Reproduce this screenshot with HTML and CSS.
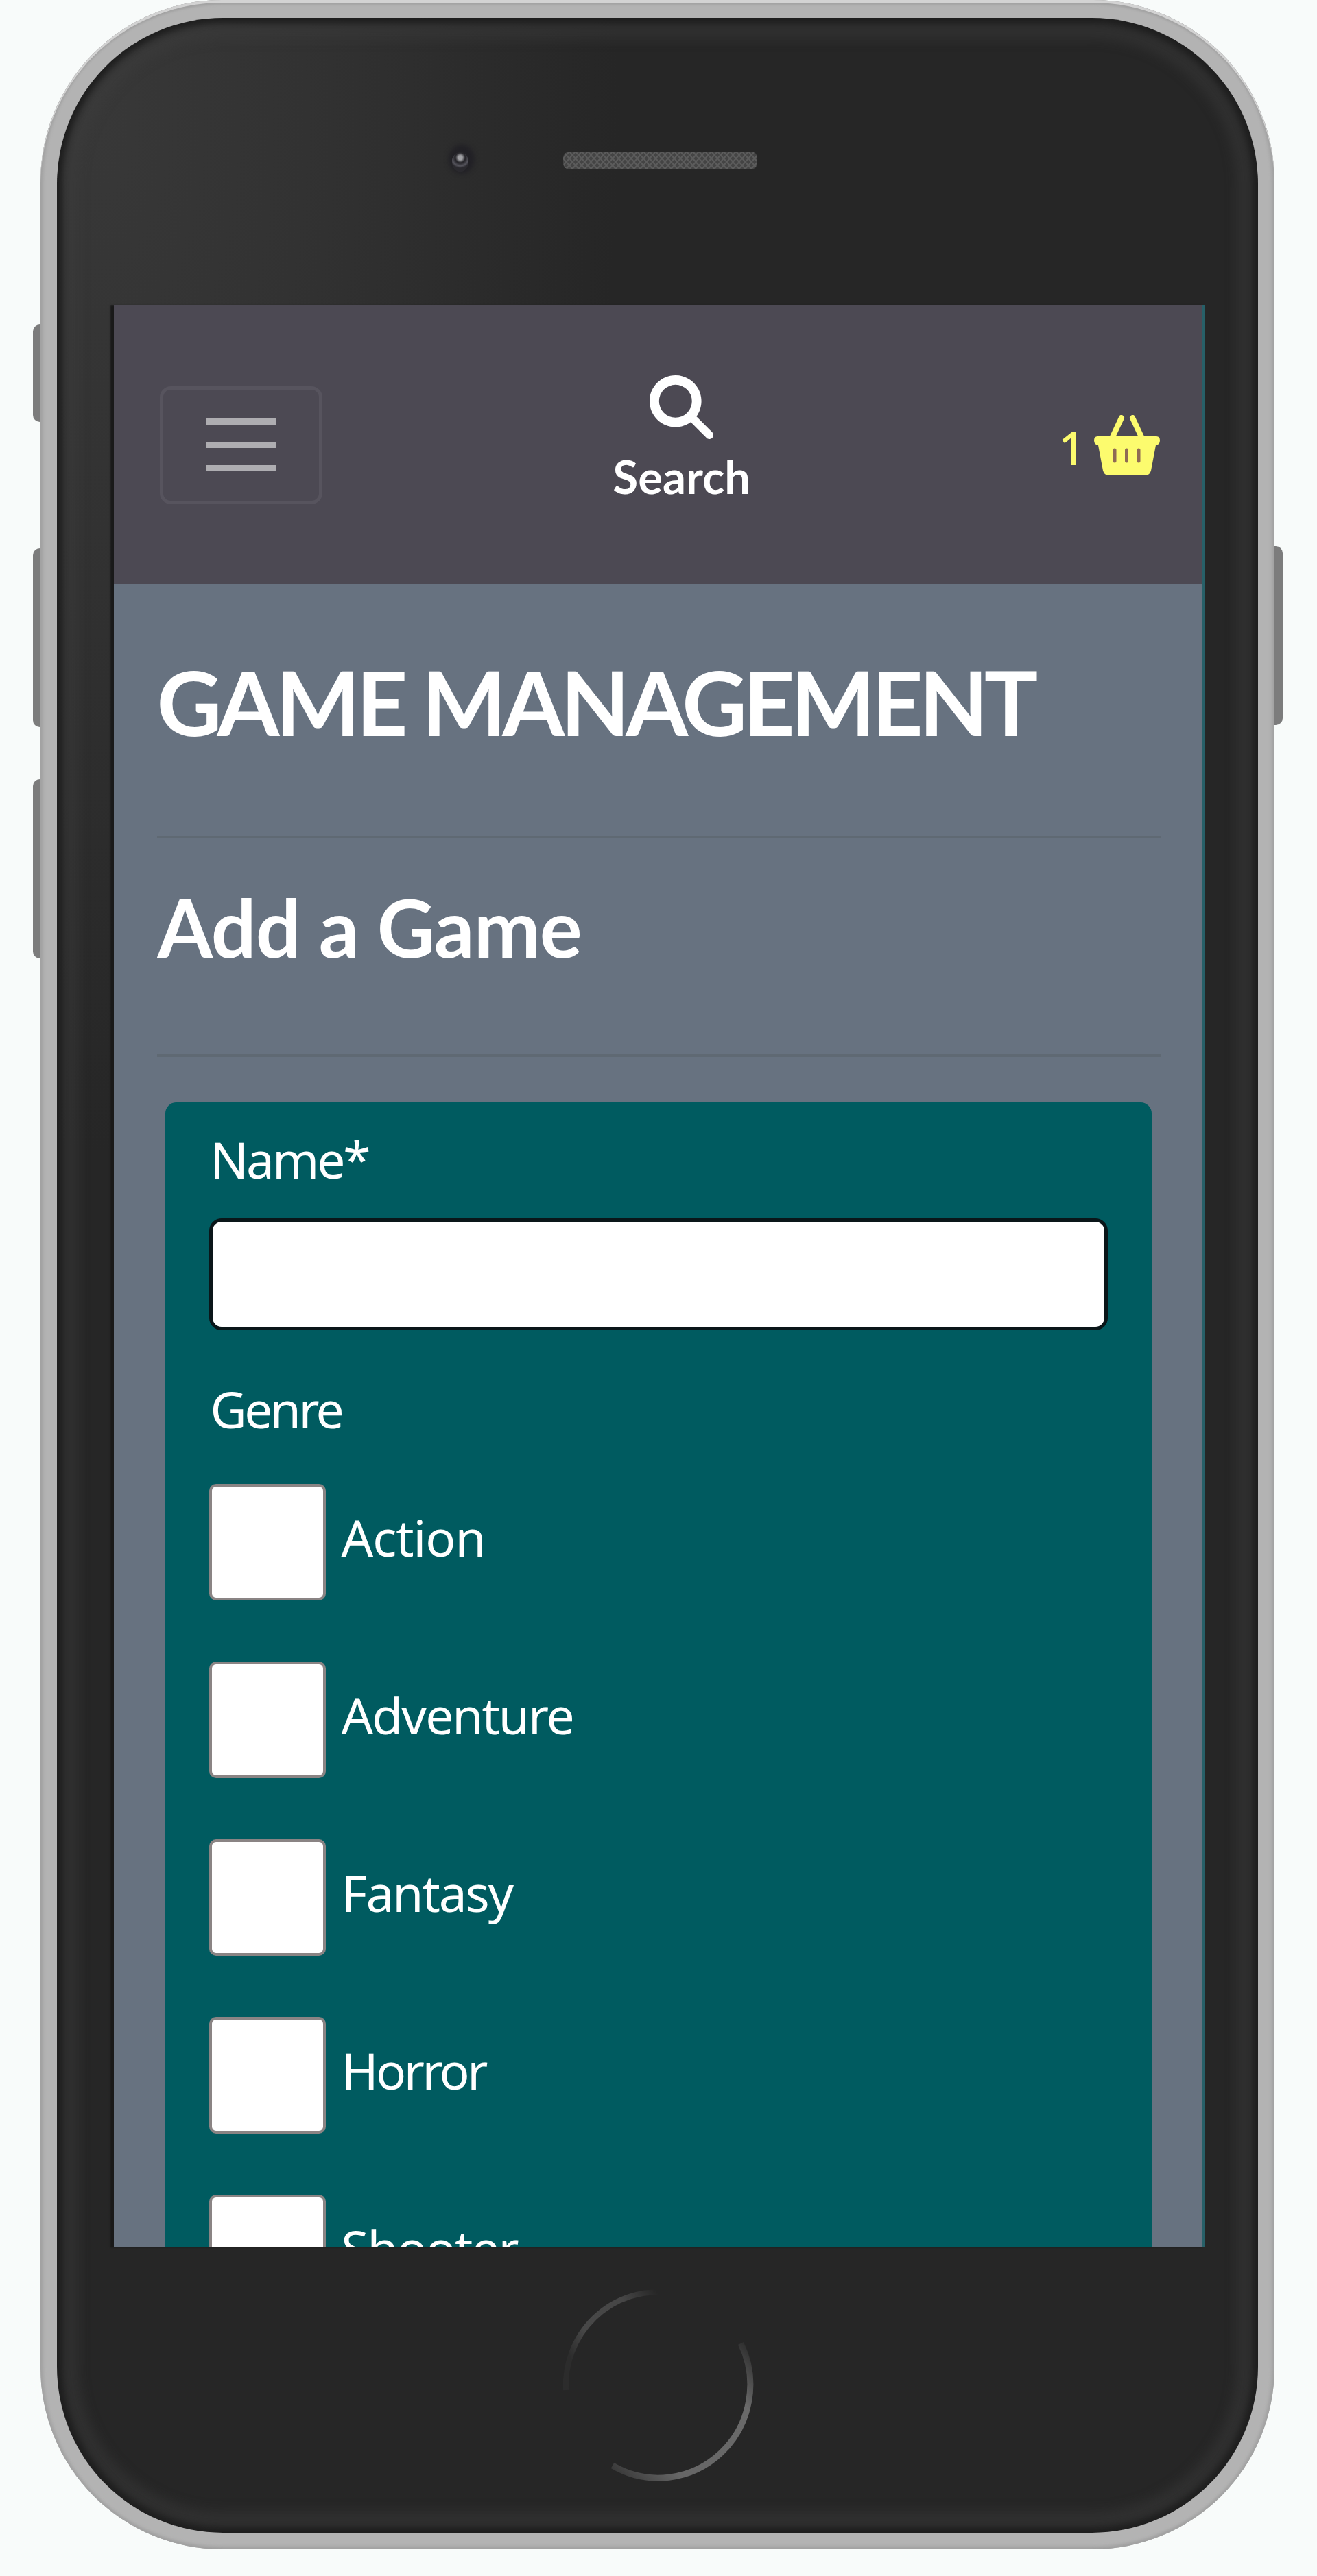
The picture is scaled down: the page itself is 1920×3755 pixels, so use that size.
FILE: index.html
```html
<!DOCTYPE html>
<html lang="en">
<head>
<meta charset="utf-8">
<title>Game Management</title>
<link rel="stylesheet" href="styles.css">
</head>
<body>
<div class="phone">
  <i class="side-key mute"></i>
  <i class="side-key vol-up"></i>
  <i class="side-key vol-down"></i>
  <i class="side-key power"></i>
  <div class="bezel">
    <div class="earpiece">
      <i class="camera"></i>
      <svg class="speaker" viewBox="0 0 283 30" width="283" height="30">
        <defs>
          <pattern id="mesh" width="9" height="10" patternUnits="userSpaceOnUse">
            <rect width="9" height="10" fill="#444"/>
            <path d="M0 0L9 10M9 0L0 10" stroke="#5c5c5c" stroke-width="2"/>
          </pattern>
        </defs>
        <rect width="283" height="26" rx="9" fill="url(#mesh)"/>
      </svg>
    </div>
    <main class="screen">
      <header class="topbar">
        <button class="toggler" aria-label="Menu"><i></i><i></i><i></i></button>
        <a class="search">
          <svg viewBox="0 0 512 512" width="93" height="93"><path fill="currentColor" d="M416 208c0 45.900-14.900 88.300-40 122.700L502.600 457.400c12.500 12.500 12.500 32.800 0 45.300s-32.800 12.500-45.300 0L330.700 376c-34.400 25.200-76.800 40-122.700 40C93.100 416 0 322.900 0 208S93.100 0 208 0S416 93.100 416 208zM208 340a132 132 0 1 0 0-264 132 132 0 1 0 0 264z"/></svg>
          <span>Search</span>
        </a>
        <a class="basket">
          <span>1</span>
          <svg viewBox="0 0 96 88" width="96" height="88">
            <path d="M40 4L25 36M56 4L71 36" stroke="currentColor" stroke-width="8" stroke-linecap="round"/>
            <path fill="currentColor" d="M5 31H91Q96 31 96 37Q96 43 90 44L83 81Q81 88 75 88H21Q15 88 13 81L6 44Q0 43 0 37Q0 31 5 31Z"/>
            <path d="M30 51V67M47.500 51V67M65 51V67" stroke="#8e6a54" stroke-width="5" stroke-linecap="round"/>
          </svg>
        </a>
      </header>
      <section class="content">
        <h1>GAME MANAGEMENT</h1>
        <hr>
        <h2>Add a Game</h2>
        <hr>
        <form class="card">
          <label class="name" for="name">Name*</label>
          <input class="field" id="name" type="text">
          <span class="genre">Genre</span>
          <label class="option"><i class="box"></i><span class="action">Action</span></label>
          <label class="option"><i class="box"></i><span class="adventure">Adventure</span></label>
          <label class="option"><i class="box"></i><span class="fantasy">Fantasy</span></label>
          <label class="option"><i class="box"></i><span class="horror">Horror</span></label>
          <label class="option"><i class="box"></i><span class="shooter">Shooter</span></label>
        </form>
      </section>
    </main>
    <svg class="home" viewBox="0 0 286 290" width="286" height="290" fill="none">
      <defs>
        <linearGradient id="hi" x1="0" y1="0.6" x2="0.9" y2="0"><stop offset="0" stop-color="#2c2c2c"/><stop offset="0.25" stop-color="#484848"/><stop offset="0.7" stop-color="#464646"/><stop offset="1" stop-color="#262626"/></linearGradient>
        <linearGradient id="lo" x1="0" y1="1" x2="1" y2="0"><stop offset="0" stop-color="#333"/><stop offset="0.25" stop-color="#666"/><stop offset="0.75" stop-color="#6a6a6a"/><stop offset="1" stop-color="#2a2a2a"/></linearGradient>
      </defs>
      <path d="M10 152A134 136 0 0 1 158 10" stroke="url(#hi)" stroke-width="8"/>
      <path d="M265 84A134 136 0 0 1 78 262" stroke="url(#lo)" stroke-width="9"/>
    </svg>
  </div>
</div>
</body>
</html>
```
FILE: styles.css
```css
* { box-sizing: border-box; }

body {
  margin: 0;
  height: 3755px;
  overflow: hidden;
  background: #f8fbfa;
  font-family: "Noto Sans", "Open Sans", sans-serif;
  color: #fff;
}

.phone {
  position: relative;
  width: 1799px;
  height: 3716px;
  margin-left: 59px;
  padding: 26px 24px 24px;
  border-radius: 265px;
  background: #b3b3b3;
  box-shadow: inset 0 4px #d3d3d3, inset 7px 0 4px -3px #a2a2a2, inset -7px 0 4px -3px #a2a2a2, inset 0 -7px 4px -3px #a0a0a0, inset 0 9px 3px -2px #a2a2a2;
}

.side-key {
  position: absolute;
  z-index: -1;
  left: -11px;
  width: 20px;
  background: #7c7c7c;
  border-radius: 10px 0 0 10px;
}
.mute { top: 473px; height: 142px; }
.vol-up { top: 799px; height: 261px; }
.vol-down { top: 1136px; height: 261px; }
.power { left: auto; right: -12px; top: 796px; height: 261px; border-radius: 0 10px 10px 0; }

.bezel {
  display: flex;
  flex-direction: column;
  align-items: center;
  height: 3666px;
  padding-left: 5px;
  border-radius: 242px;
  background: radial-gradient(ellipse 760px 1500px at 60px 150px, #383838 0, #323232 40%, rgba(38, 38, 38, 0) 100%), #262626;
  box-shadow: inset 0 0 10px 8px #1e1e1e, inset 0 0 16px 32px rgba(62, 62, 62, .4);
}

.earpiece {
  display: flex;
  align-items: center;
  gap: 138px;
  height: 419px;
  margin-left: -172px;
}
.camera {
  width: 24px;
  height: 28px;
  margin-left: 12px;
  border-radius: 50%;
  background: radial-gradient(circle at 50% 28%, #a0a0a4 0 3px, #28272c 7px 8px, #55545c 12px, #2a292e 15px);
  box-shadow: 2px -4px 6px 7px #222126;
}

.screen {
  width: 1591px;
  height: 2831px;
  flex: none;
  overflow: hidden;
  background: #677280;
  border-right: 4px solid #276068;
  box-shadow: -5px 0 2px #191919;
}

.topbar {
  display: flex;
  align-items: center;
  justify-content: space-between;
  height: 407px;
  padding: 0 62px 0 67px;
  background: #4c4953;
}
.toggler {
  display: flex;
  flex-direction: column;
  align-items: center;
  justify-content: center;
  gap: 25px;
  width: 237px;
  height: 172px;
  padding: 0;
  border: 5px solid #57545e;
  border-radius: 16px;
  background: none;
}
.toggler i { width: 103px; height: 9px; background: #aeadb1; }

.search {
  display: flex;
  flex-direction: column;
  align-items: center;
  gap: 12px;
  margin-left: -25px;
  padding-bottom: 15px;
  font: 700 67px/84px Lato, sans-serif;
}
.basket {
  display: flex;
  align-items: center;
  gap: 13px;
  color: #fcfb6e;
  font: 600 67px/84px "Open Sans", sans-serif;
}
.basket span { padding-top: 6px; }

.content { padding: 0 60px 0 63px; }

h1, h2 { margin: 0; font-family: Lato, sans-serif; font-weight: 700; white-space: nowrap; }
h1 { padding: 91px 0 115px; font-size: 131px; line-height: 160px; letter-spacing: -6px; }
h2 { padding: 59px 0 114px 1px; font-size: 116px; line-height: 142px; letter-spacing: -1px; }
hr { height: 4px; margin: 0; border: 0; background: #5f6973; }

.card {
  display: flex;
  flex-direction: column;
  width: 1438px;
  margin: 66px 0 0 12px;
  padding: 38px 64px;
  border-radius: 16px;
  background: #005b60;
  font-size: 73px;
  line-height: 90px;
}
.name, .genre { padding-left: 2px; }
.name { letter-spacing: -3px; }
.genre { margin-top: 70px; letter-spacing: -3.500px; }
.field {
  width: 1310px;
  height: 163px;
  margin-top: 41px;
  border: 5px solid #0a1619;
  border-radius: 18px;
  background: #fff;
}
.option { display: flex; align-items: center; gap: 23px; height: 170px; margin-bottom: 89px; letter-spacing: -2px; }
.genre + .option { margin-top: 64px; }
.box {
  width: 170px;
  height: 170px;
  border: 4px solid #8a8484;
  border-radius: 10px;
  background: #fff;
}
.option span { margin-top: -14px; }
.option .action { letter-spacing: -1px; }
.option .horror { letter-spacing: -3.500px; }

.home { margin: 56px 0 0 -6px; }
```
